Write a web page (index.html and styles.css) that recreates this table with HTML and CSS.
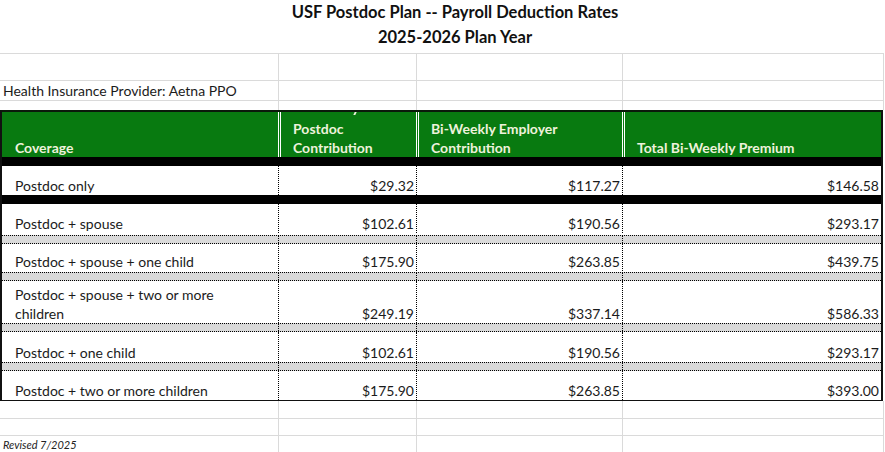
FILE: index.html
```html
<!DOCTYPE html>
<html lang="en">
<head>
<meta charset="utf-8">
<title>USF Postdoc Plan -- Payroll Deduction Rates</title>
<link rel="stylesheet" href="styles.css">
</head>
<body>
<div class="title">
  <div>USF Postdoc Plan -- Payroll Deduction Rates</div>
  <div>2025-2026 Plan Year</div>
</div>

<div class="grow ga"><div class="gc"></div><div class="gc"></div><div class="gc"></div><div class="gc"></div></div>
<div class="grow gb"><div class="gc provider">Health Insurance Provider: Aetna PPO</div><div class="gc"></div><div class="gc"></div><div class="gc"></div></div>
<div class="grow gcr"><div class="gc"></div><div class="gc"></div><div class="gc"></div><div class="gc"></div></div>

<div class="rates">
  <div class="trow head">
    <div class="hc">Coverage</div>
    <div class="hc sep"><i class="tick"></i><span>Postdoc</span><span>Contribution</span></div>
    <div class="hc sep"><span>Bi-Weekly Employer</span><span>Contribution</span></div>
    <div class="hc sep"><span>Total Bi-Weekly Premium</span></div>
  </div>

  <div class="trow band dark"><div></div><div class="dsep"></div><div class="dsep"></div><div class="dsep"></div></div>
  <div class="trow data r1">
    <div class="dc">Postdoc only</div>
    <div class="dc num dsep">$29.32</div>
    <div class="dc num dsep">$117.27</div>
    <div class="dc num dsep">$146.58</div>
  </div>

  <div class="trow band dark"><div></div><div class="dsep"></div><div class="dsep"></div><div class="dsep"></div></div>
  <div class="trow data r2">
    <div class="dc">Postdoc + spouse</div>
    <div class="dc num dsep">$102.61</div>
    <div class="dc num dsep">$190.56</div>
    <div class="dc num dsep">$293.17</div>
  </div>

  <div class="trow band"><div></div><div class="dsep"></div><div class="dsep"></div><div class="dsep"></div></div>
  <div class="trow data r3">
    <div class="dc">Postdoc + spouse + one child</div>
    <div class="dc num dsep">$175.90</div>
    <div class="dc num dsep">$263.85</div>
    <div class="dc num dsep">$439.75</div>
  </div>

  <div class="trow band"><div></div><div class="dsep"></div><div class="dsep"></div><div class="dsep"></div></div>
  <div class="trow data r4">
    <div class="dc">Postdoc + spouse + two or more<br>children</div>
    <div class="dc num dsep">$249.19</div>
    <div class="dc num dsep">$337.14</div>
    <div class="dc num dsep">$586.33</div>
  </div>

  <div class="trow band"><div></div><div class="dsep"></div><div class="dsep"></div><div class="dsep"></div></div>
  <div class="trow data r5">
    <div class="dc">Postdoc + one child</div>
    <div class="dc num dsep">$102.61</div>
    <div class="dc num dsep">$190.56</div>
    <div class="dc num dsep">$293.17</div>
  </div>

  <div class="trow band"><div></div><div class="dsep"></div><div class="dsep"></div><div class="dsep"></div></div>
  <div class="trow data r6">
    <div class="dc">Postdoc + two or more children</div>
    <div class="dc num dsep">$175.90</div>
    <div class="dc num dsep">$263.85</div>
    <div class="dc num dsep">$393.00</div>
  </div>
</div>

<div class="grow gd"><div class="gc"></div><div class="gc"></div><div class="gc"></div><div class="gc"></div></div>
<div class="grow ge"><div class="gc"></div><div class="gc"></div><div class="gc"></div><div class="gc"></div></div>
<div class="grow gf"><div class="gc revised">Revised 7/2025</div><div class="gc"></div><div class="gc"></div><div class="gc"></div></div>
</body>
</html>
```

FILE: styles.css
```css
* { box-sizing: border-box; }

body {
  margin: 0;
  width: 885px;
  background: #ffffff;
  color: #1b1b1b;
  font-family: Lato, "Liberation Sans", Arial, sans-serif;
  font-size: 14px;
  overflow: hidden;
}

.title {
  height: 53px;
  width: 884px;
  padding-left: 26px;
  text-align: center;
  font-weight: 700;
  font-size: 16.5px;
  line-height: 25px;
  color: #111111;
}

/* spreadsheet gridlines */
.grow {
  display: grid;
  grid-template-columns: 279px 138px 206px 261px;
  width: 884px;
  border-top: 1px solid #dadada;
}
.gc {
  border-right: 1px solid #dadada;
  display: flex;
  align-items: center;
  white-space: nowrap;
}
.ga { height: 27px; }
.gb { height: 20px; }
.gcr { height: 10px; }
.gd { height: 17px; border-top: none; }
.ge { height: 17px; }
.gf { height: 18px; }

.provider {
  padding-left: 3px;
  font-size: 14px;
  line-height: 19px;
}
.revised {
  padding-left: 3px;
  font-style: italic;
  font-size: 11px;
  color: #222222;
}

/* rate table */
.rates {
  width: 883px;
  border-top: 2px solid #0b1a0b;
  border-left: 2px solid #111111;
  border-right: 2px solid #111111;
  border-bottom: 1px solid #111111;
}
.trow {
  display: grid;
  grid-template-columns: 276px 138px 206px 259px;
}

.head {
  height: 45px;
  background: #087a10;
  color: #eef2dc;
  font-weight: 700;
  line-height: 19px;
}
.hc {
  position: relative;
  display: flex;
  flex-direction: column;
  justify-content: flex-end;
  overflow: hidden;
  padding-left: 13px;
  white-space: nowrap;
}
.hc.sep {
  border-left: 3px double #ffffff;
  padding-left: 12px;
}
/* clipped descender of a hidden first header line */
.tick {
  position: absolute;
  left: 73px;
  top: 0;
  width: 2px;
  height: 3px;
  background: #eef2dc;
  transform: skewX(-25deg);
}

.band {
  height: 9px;
  background: #d9d9d9;
  border-top: 1px dotted #000000;
  border-bottom: 1px dotted #000000;
}
.band.dark { background: #000000; }

.dsep { border-left: 1px dotted #000000; }

.dc {
  display: flex;
  align-items: flex-end;
  padding-left: 13px;
  line-height: 19px;
  white-space: nowrap;
}
.dc.num {
  justify-content: flex-end;
  padding-left: 0;
  padding-right: 2px;
}

.r1 { height: 29px; }
.r2 { height: 31px; padding-bottom: 2px; }
.r3 { height: 28px; padding-bottom: 1px; }
.r4 { height: 42px; }
.r5 { height: 30px; }
.r6 { height: 29px; }
```
